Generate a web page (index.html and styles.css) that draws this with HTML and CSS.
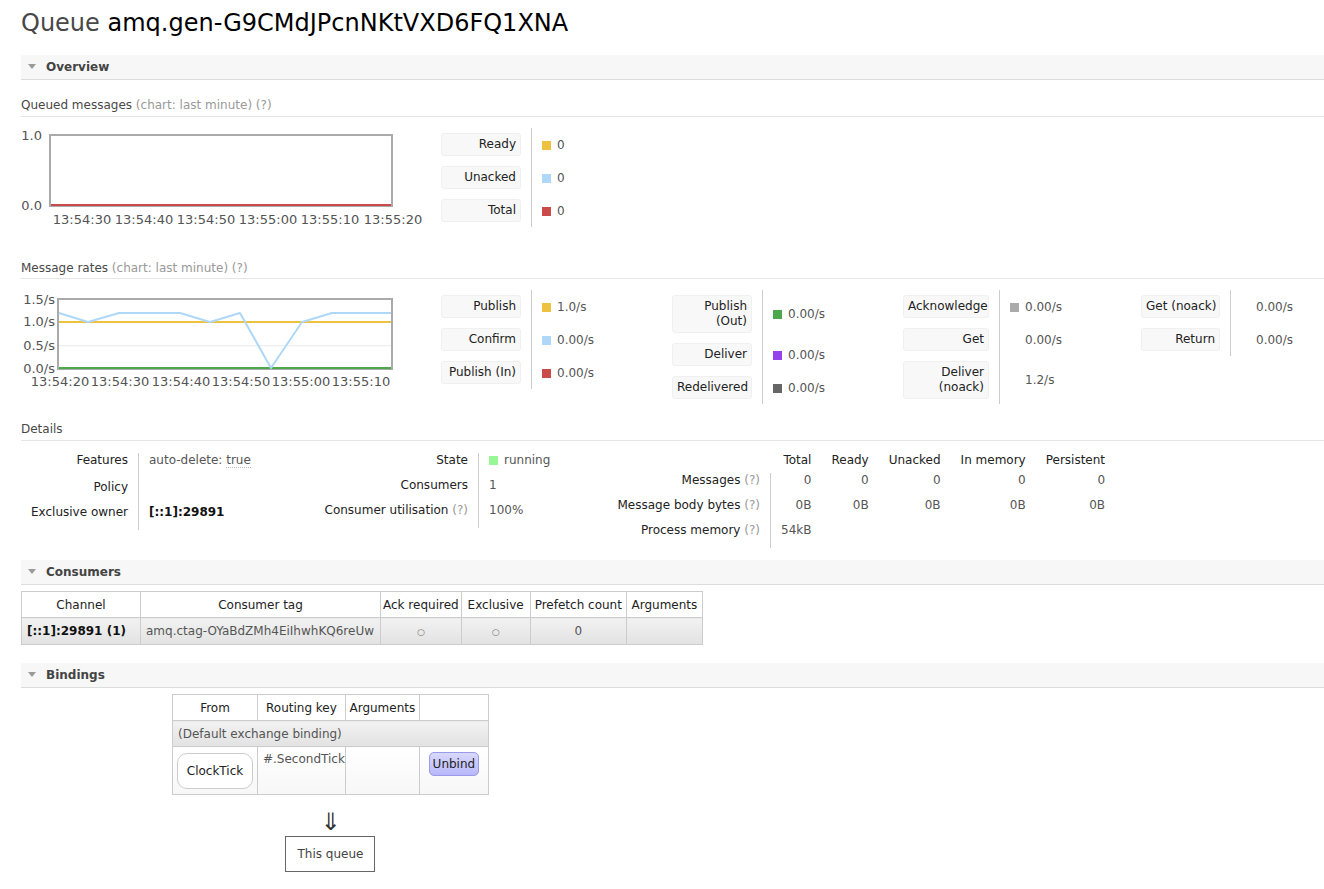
FILE: index.html
```html
<!DOCTYPE html>
<html>
<head>
<meta charset="utf-8">
<title>Queue amq.gen-G9CMdJPcnNKtVXD6FQ1XNA</title>
<link rel="stylesheet" href="styles.css">
</head>
<body>
<div id="main">
  <h1>Queue <b>amq.gen-G9CMdJPcnNKtVXD6FQ1XNA</b></h1>

  <div class="section">
    <h2>Overview</h2>
    <h3 class="first">Queued messages <span class="muted">(chart: last minute) (?)</span></h3>
    <div class="chart-row queued">
      <svg class="chart" width="420" height="100" viewBox="0 0 420 100">
        <g class="ylab">
          <text x="21" y="12">1.0</text>
          <text x="21" y="82">0.0</text>
        </g>
        <rect x="29" y="7" width="342" height="71" fill="#fff" stroke="#aaa" stroke-width="2"/>
        <line x1="30" y1="77" x2="370" y2="77" stroke="#cb4b4b" stroke-width="2"/>
        <g class="xlab">
          <text x="61" y="96">13:54:30</text>
          <text x="123" y="96">13:54:40</text>
          <text x="185" y="96">13:54:50</text>
          <text x="247" y="96">13:55:00</text>
          <text x="309" y="96">13:55:10</text>
          <text x="372" y="96">13:55:20</text>
        </g>
      </svg>
      <table class="legend">
        <tr><th><div class="box">Ready</div></th><td><span class="sq c-ready"></span>0</td></tr>
        <tr><th><div class="box">Unacked</div></th><td><span class="sq c-unacked"></span>0</td></tr>
        <tr><th><div class="box">Total</div></th><td><span class="sq c-total"></span>0</td></tr>
      </table>
    </div>

    <h3 class="rates">Message rates <span class="muted">(chart: last minute) (?)</span></h3>
    <div class="chart-row rates-row">
      <svg class="chart" width="420" height="100" viewBox="0 0 420 100">
        <g class="ylab">
          <text x="34" y="14">1.5/s</text>
          <text x="34" y="36">1.0/s</text>
          <text x="34" y="60">0.5/s</text>
          <text x="34" y="83">0.0/s</text>
        </g>
        <rect x="37" y="9" width="334" height="70" fill="#fff" stroke="#aaa" stroke-width="2"/>
        <line x1="38" y1="55.7" x2="370" y2="55.7" stroke="#ebebeb" stroke-width="1"/>
        <line x1="38" y1="32" x2="370" y2="32" stroke="#edc240" stroke-width="2"/>
        <line x1="38" y1="78" x2="370" y2="78" stroke="#4da74d" stroke-width="2"/>
        <polyline fill="none" stroke="#afd8f8" stroke-width="2" stroke-linejoin="round"
          points="38,23 67,32 98,23 159,23 189,32 219,23 250,78 281,32 311,23 370,23"/>
        <g class="xlab">
          <text x="39" y="96">13:54:20</text>
          <text x="99" y="96">13:54:30</text>
          <text x="160" y="96">13:54:40</text>
          <text x="220" y="96">13:54:50</text>
          <text x="280" y="96">13:55:00</text>
          <text x="340" y="96">13:55:10</text>
        </g>
      </svg>
      <div class="rate-legends">
        <div class="lg lg1">
          <table class="legend">
            <tr><th><div class="box">Publish</div></th><td><span class="sq c-ready"></span>1.0/s</td></tr>
            <tr><th><div class="box">Confirm</div></th><td><span class="sq c-unacked"></span>0.00/s</td></tr>
            <tr><th><div class="box">Publish (In)</div></th><td><span class="sq c-total"></span>0.00/s</td></tr>
          </table>
        </div>
        <div class="lg lg2">
          <table class="legend">
            <tr><th><div class="box">Publish<br>(Out)</div></th><td><span class="sq c-green"></span>0.00/s</td></tr>
            <tr><th><div class="box">Deliver</div></th><td><span class="sq c-purple"></span>0.00/s</td></tr>
            <tr><th><div class="box">Redelivered</div></th><td><span class="sq c-dark"></span>0.00/s</td></tr>
          </table>
        </div>
        <div class="lg lg3">
          <table class="legend">
            <tr><th><div class="box">Acknowledge</div></th><td><span class="sq c-gray"></span>0.00/s</td></tr>
            <tr><th><div class="box">Get</div></th><td><span class="sq none"></span>0.00/s</td></tr>
            <tr><th><div class="box">Deliver<br>(noack)</div></th><td><span class="sq none"></span>1.2/s</td></tr>
          </table>
        </div>
        <div class="lg lg4">
          <table class="legend">
            <tr><th><div class="box">Get (noack)</div></th><td><span class="sq none"></span>0.00/s</td></tr>
            <tr><th><div class="box">Return</div></th><td><span class="sq none"></span>0.00/s</td></tr>
          </table>
        </div>
      </div>
    </div>

    <h3 class="details-h">Details</h3>
    <div class="details">
      <table class="facts t1">
        <tr class="r-first"><th>Features</th><td>auto-delete: <abbr>true</abbr></td></tr>
        <tr><th>Policy</th><td></td></tr>
        <tr><th>Exclusive owner</th><td><b class="owner">[::1]:29891</b></td></tr>
      </table>
      <table class="facts t2">
        <tr><th>State</th><td><span class="sq c-running"></span>running</td></tr>
        <tr><th>Consumers</th><td>1</td></tr>
        <tr><th>Consumer utilisation <span class="muted">(?)</span></th><td>100%</td></tr>
      </table>
      <table class="facts t3">
        <tr class="hdr"><th></th><td>Total</td><td>Ready</td><td>Unacked</td><td>In memory</td><td>Persistent</td></tr>
        <tr><th>Messages <span class="muted">(?)</span></th><td class="sep">0</td><td>0</td><td>0</td><td>0</td><td>0</td></tr>
        <tr><th>Message body bytes <span class="muted">(?)</span></th><td class="sep">0B</td><td>0B</td><td>0B</td><td>0B</td><td>0B</td></tr>
        <tr><th>Process memory <span class="muted">(?)</span></th><td class="sep">54kB</td><td></td><td></td><td></td><td></td></tr>
      </table>
    </div>
  </div>

  <div class="section">
    <h2 class="consumers-h">Consumers</h2>
    <table class="list consumers">
      <thead>
        <tr><th class="w-ch">Channel</th><th class="w-tag">Consumer tag</th><th class="w-ack">Ack required</th><th class="w-ex">Exclusive</th><th class="w-pf">Prefetch count</th><th class="w-arg">Arguments</th></tr>
      </thead>
      <tbody>
        <tr class="alt"><td class="ch"><b>[::1]:29891 (1)</b></td><td class="tag">amq.ctag-OYaBdZMh4EiIhwhKQ6reUw</td><td class="c"><span class="circ">○</span></td><td class="c"><span class="circ">○</span></td><td class="c">0</td><td></td></tr>
      </tbody>
    </table>
  </div>

  <div class="section">
    <h2 class="bindings-h">Bindings</h2>
    <div class="bindings-wrapper">
      <table class="list bindings">
        <thead>
          <tr><th class="b-from">From</th><th class="b-key">Routing key</th><th class="b-arg">Arguments</th><th class="b-act"></th></tr>
        </thead>
        <tbody>
          <tr class="alt"><td colspan="4" class="default">(Default exchange binding)</td></tr>
          <tr class="bind-row"><td class="from"><span class="exchange">ClockTick</span></td><td class="key">#.SecondTick</td><td></td><td class="act"><button class="unbind">Unbind</button></td></tr>
        </tbody>
      </table>
      <div class="arrow">⇓</div>
      <span class="queue">This queue</span>
    </div>
  </div>
</div>
</body>
</html>
```

FILE: styles.css
```css
body {
  margin: 0;
  font-family: "DejaVu Sans", Verdana, sans-serif;
  font-size: 12px;
  color: #484848;
  background: #fff;
}

#main {
  padding: 0 0 20px 21px;
}

h1 {
  margin: 0;
  padding-top: 8px;
  font-size: 24px;
  line-height: 30px;
  font-weight: normal;
  color: #484848;
}

h1 b {
  font-weight: normal;
  color: #000;
}

h2 {
  position: relative;
  margin: 17px 0 0;
  height: 24px;
  line-height: 24px;
  padding-left: 25px;
  font-size: 12px;
  font-weight: bold;
  color: #444;
  background: #f7f7f7;
  border-bottom: 1px solid #ddd;
}

h2::before {
  content: "";
  position: absolute;
  left: 7px;
  top: 9px;
  border-top: 5px solid #9a9a9a;
  border-left: 4px solid transparent;
  border-right: 4px solid transparent;
}

h3 {
  margin: 18px 0 0;
  padding: 0 0 3px;
  font-size: 12px;
  font-weight: normal;
  line-height: 15px;
  color: #484848;
  border-bottom: 1px solid #e6e6e6;
}

h3.rates {
  margin-top: 33px;
  padding-bottom: 2px;
}

.muted {
  color: #999;
}

.chart-row {
  display: flex;
  align-items: flex-start;
  margin-top: 11px;
}

.rates-row {
  margin-top: 11px;
}

.chart {
  display: block;
  flex: none;
}

.chart text {
  font-family: "DejaVu Sans", Verdana, sans-serif;
  font-size: 13px;
  fill: #545454;
}

.chart .ylab text {
  text-anchor: end;
}

.chart .xlab text {
  text-anchor: middle;
}

.rate-legends {
  display: flex;
  align-items: flex-start;
}

.lg { flex: none; }
.lg1 { width: 231px; }
.lg2 { width: 231px; }
.lg3 { width: 238px; }

table.legend {
  border-collapse: collapse;
  border-spacing: 0;
}

table.legend th {
  padding: 5px 10px 5px 0;
  font-weight: normal;
  text-align: right;
}

table.legend td {
  padding: 0 0 0 10px;
  border-left: 1px solid #ccc;
  color: #555;
  white-space: nowrap;
  vertical-align: middle;
}

.box {
  box-sizing: border-box;
  width: 80px;
  padding: 3px 4px;
  line-height: 15px;
  color: #222;
  background: #f8f8f8;
  border: 1px solid #f0f0f0;
  border-radius: 3px;
  white-space: nowrap;
}

.lg3 .box { width: 86px; }
.lg4 .box { width: 79px; }

.sq {
  display: inline-block;
  width: 9px;
  height: 9px;
  margin-right: 6px;
  vertical-align: -1px;
}

.sq.none { background: transparent; }
.c-ready { background: #edc240; }
.c-unacked { background: #afd8f8; }
.c-total { background: #cb4b4b; }
.c-green { background: #4da74d; }
.c-purple { background: #9440ed; }
.c-dark { background: #666; }
.c-gray { background: #aaa; }
.c-running { background: #98f898; }

h3.details-h {
  margin-top: 18px;
}

.details {
  display: flex;
  align-items: flex-start;
  margin-top: 12px;
}

table.facts {
  border-collapse: collapse;
  border-spacing: 0;
}

table.facts th {
  padding: 0 10px 10px 0;
  font-weight: normal;
  text-align: right;
  line-height: 15px;
  color: #222;
  white-space: nowrap;
  vertical-align: top;
}

table.facts td {
  padding: 0 10px 10px 10px;
  line-height: 15px;
  color: #555;
  white-space: nowrap;
  vertical-align: top;
}

.t1 { width: 279px; }
.t1 th { width: 107px; }
.t1 td { padding-left: 12px; border-left: 1px solid #ccc; }
.t1 tr.r-first th, .t1 tr.r-first td { padding-bottom: 12px; }

.t2 { width: 300px; }
.t2 th { width: 168px; }
.t2 td { border-left: 1px solid #ccc; }

.t3 th { width: 160px; }
.t3 td { text-align: right; }
.t3 tr.hdr td { color: #222; padding-bottom: 5px; }
.t3 tr.hdr th { padding-bottom: 5px; }
.t3 td.sep { border-left: 1px solid #ccc; }

abbr {
  text-decoration: none;
  border-bottom: 1px dotted #bbb;
}

.owner {
  color: #111;
}

h2.consumers-h {
  margin-top: 12px;
}

table.list {
  border-collapse: collapse;
  border: 1px solid #ccc;
  margin-top: 6px;
}

table.list th {
  padding: 0 4px;
  height: 25px;
  font-weight: normal;
  color: #222;
  text-align: center;
  border: 1px solid #ccc;
  background: #fff;
  white-space: nowrap;
}

table.list td {
  padding: 0 5px;
  border: 1px solid #ccc;
  white-space: nowrap;
}

.consumers tbody tr {
  height: 27px;
}

.consumers tr.alt td {
  background: linear-gradient(#f2f2f2, #e2e2e2);
  color: #555;
}

.w-ch { width: 110px; }
.w-tag { width: 231px; }
table.list th.w-ack { padding: 0 2px; }
.w-ex { width: 60px; }
.w-pf { width: 87px; }
.w-arg { width: 67px; }

td.ch b {
  color: #111;
}

td.c {
  text-align: center;
}

.circ {
  font-size: 9px;
  color: #777;
}

h2.bindings-h {
  margin-top: 18px;
}

.bindings-wrapper {
  display: inline-block;
  margin-left: 151px;
  text-align: center;
}

table.bindings {
  text-align: left;
}

table.bindings th {
  padding: 0 2px;
}

table.bindings th.b-key {
  padding: 0 1px;
}

.b-from { width: 80px; }
.b-key { width: 80px; }
.b-arg { width: 69px; }
.b-act { width: 64px; }

.bindings tr.alt {
  height: 26px;
}

.bindings tr.alt td {
  background: linear-gradient(#f2f2f2, #e2e2e2);
  color: #555;
}

.bind-row {
  height: 48px;
}

.bind-row td {
  padding: 0;
  vertical-align: top;
  background: linear-gradient(#fff, #f7f7f7);
}

table.list .bind-row td.from {
  vertical-align: middle;
  text-align: center;
  padding: 0;
}

table.list .bind-row td.key {
  padding: 5px 0 0 5px;
  line-height: 15px;
  color: #555;
}

table.list .bind-row td.act {
  padding: 5px 0 0;
  text-align: center;
}

.exchange {
  display: inline-block;
  padding: 10px 9px;
  line-height: 14px;
  border: 1px solid #ccc;
  border-radius: 10px;
  background: #fff;
  color: #222;
}

.unbind {
  font-family: "DejaVu Sans", Verdana, sans-serif;
  font-size: 12px;
  line-height: 15px;
  padding: 4px 3px 3px;
  color: #222;
  background: linear-gradient(#d8d8ff, #b8b8fa);
  border: 1px solid #9a9ae8;
  border-radius: 5px;
}

.arrow {
  margin-top: 16px;
  font-size: 24px;
  line-height: 22px;
  color: #333;
}

.queue {
  display: inline-block;
  margin-top: 3px;
  padding: 10px 11px;
  line-height: 14px;
  border: 1px solid #666;
  color: #444;
}
```
